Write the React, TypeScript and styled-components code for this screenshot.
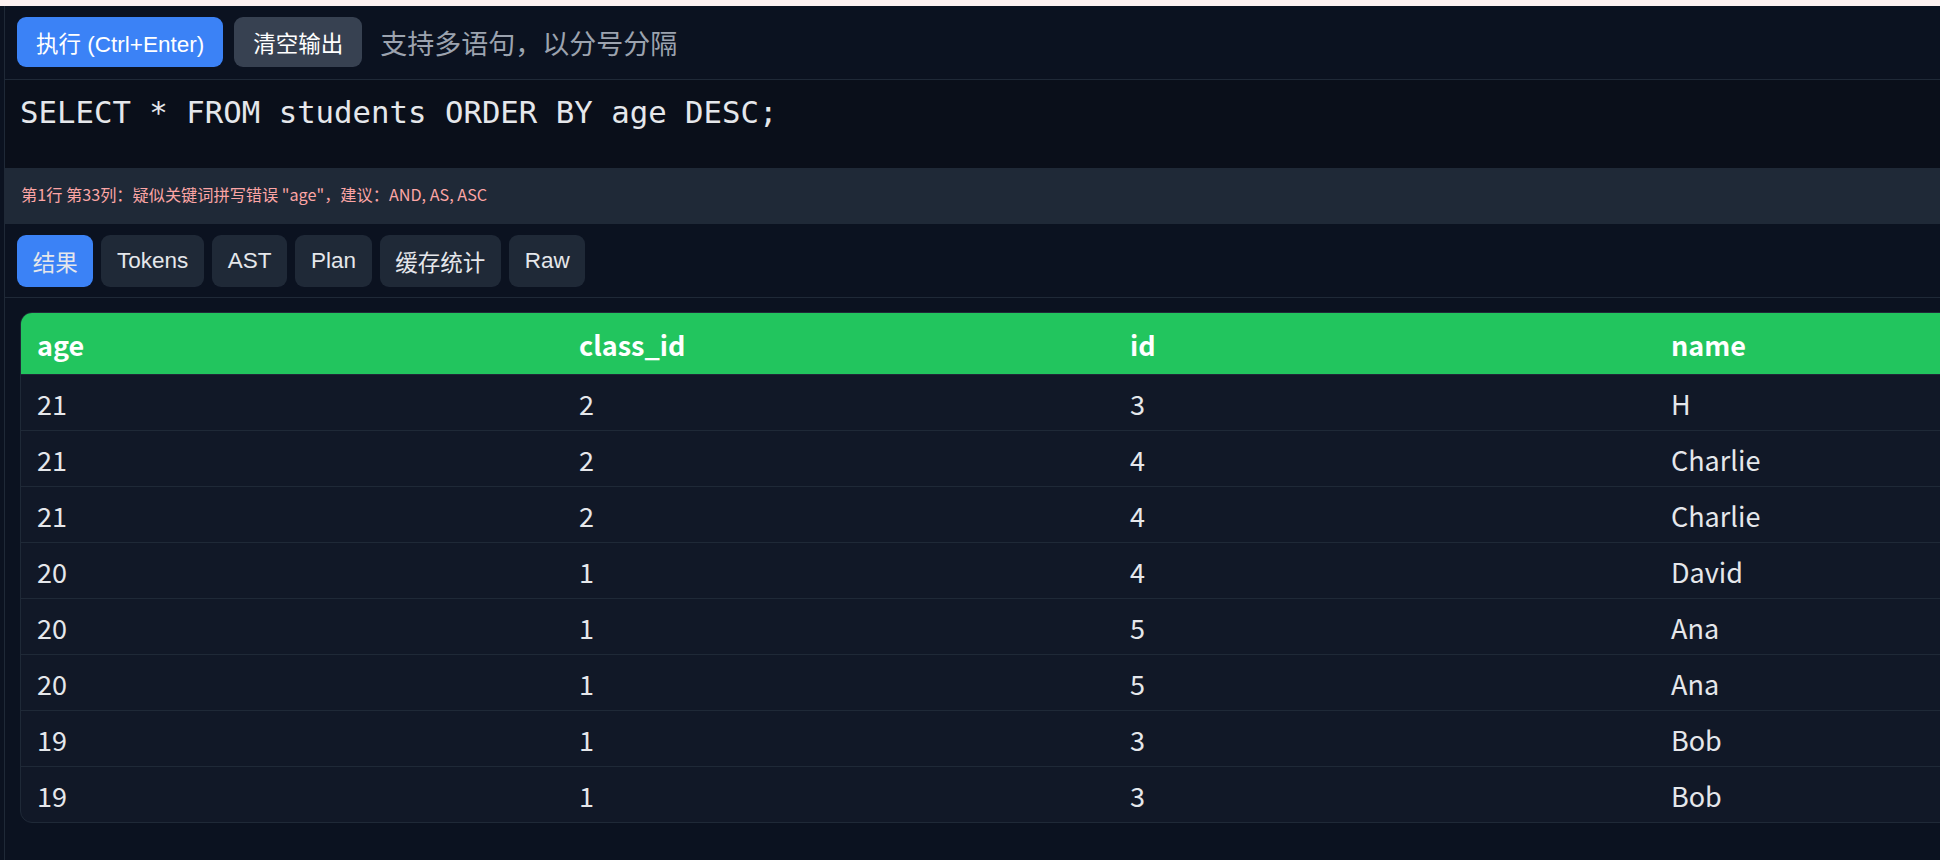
import React from "react";
import styled, { createGlobalStyle } from "styled-components";

const GlobalStyle = createGlobalStyle`
  html, body {
    margin: 0;
    padding: 0;
    overflow: hidden;
    background: #0b1220;
  }
  body {
    font-family: "Liberation Sans", "Noto Sans CJK SC", sans-serif;
  }
  * { box-sizing: border-box; }
`;

const Page = styled.div`
  display: flex;
  flex-direction: column;
  min-height: 860px;
  width: 2240px;
`;

const TopStrip = styled.div`
  height: 6px;
  background: #fdf1f1;
`;

const Shell = styled.div`
  flex: 1;
  margin-left: 4px;
  border-left: 1px solid #1f2937;
  background: #0b1220;
  display: flex;
  flex-direction: column;
`;

const Toolbar = styled.div`
  display: flex;
  align-items: center;
  gap: 11px;
  padding: 11px 12px 12px;
  border-bottom: 1px solid #1f2937;
`;

const Button = styled.button<{ $primary?: boolean }>`
  height: 50px;
  padding: 0 19px;
  border: none;
  border-radius: 9px;
  font-family: "Liberation Sans", "Noto Sans CJK SC", sans-serif;
  font-size: 22.5px;
  color: #ffffff;
  background: ${(p) => (p.$primary ? "#3b82f6" : "#374151")};
  cursor: pointer;
  white-space: nowrap;
`;

const Hint = styled.span`
  margin-left: 7px;
  font-family: "Noto Sans CJK SC", sans-serif;
  font-size: 27px;
  color: #9ca3af;
`;

const Editor = styled.div`
  height: 88px;
  padding: 10px 15px 0;
  background: #0a0f1a;
  font-family: "DejaVu Sans Mono", "Liberation Mono", monospace;
  font-size: 30.7px;
  line-height: 46px;
  color: #e5e7eb;
  white-space: pre;
`;

const ErrorBar = styled.div`
  height: 56px;
  display: flex;
  align-items: center;
  padding: 0 16px 5px;
  background: #1f2937;
  font-family: "Noto Sans CJK SC", sans-serif;
  font-size: 16.2px;
  color: #fca5a5;
  white-space: pre;
`;

const Tabs = styled.div`
  display: flex;
  gap: 8px;
  padding: 11px 12px 10px;
  border-bottom: 1px solid #1f2937;
`;

const Tab = styled.button<{ $active?: boolean }>`
  height: 52px;
  padding: 0 15.7px;
  border: none;
  border-radius: 9px;
  font-family: "Liberation Sans", "Noto Sans CJK SC", sans-serif;
  font-size: 22.5px;
  color: #e5e7eb;
  background: ${(p) => (p.$active ? "#3b82f6" : "#1f2937")};
  cursor: pointer;
`;

const TableWrap = styled.div`
  padding: 14px 15px 0;
`;

const Table = styled.table`
  width: 2200px;
  table-layout: fixed;
  border-collapse: separate;
  border-spacing: 0;
  border: 1px solid #1f2937;
  border-radius: 12px;
  overflow: hidden;
  background: #111827;
  font-family: "Noto Sans CJK SC", sans-serif;
`;

const HeadCell = styled.th`
  height: 61px;
  padding: 2px 16px 0;
  background: #22c55e;
  color: #ffffff;
  font-size: 27px;
  font-weight: 700;
  text-align: left;
  vertical-align: middle;
`;

const Cell = styled.td`
  height: 56px;
  padding: 2px 16px 0;
  font-size: 27px;
  color: #e5e7eb;
  vertical-align: middle;
  border-top: 1px solid #1f2937;
`;

const columns = ["age", "class_id", "id", "name"];
const widths = [542, 551, 541, 564];

const rows: (string | number)[][] = [
  [21, 2, 3, "H"],
  [21, 2, 4, "Charlie"],
  [21, 2, 4, "Charlie"],
  [20, 1, 4, "David"],
  [20, 1, 5, "Ana"],
  [20, 1, 5, "Ana"],
  [19, 1, 3, "Bob"],
  [19, 1, 3, "Bob"],
];

const tabs = ["结果", "Tokens", "AST", "Plan", "缓存统计", "Raw"];

export default function App() {
  return (
    <>
      <GlobalStyle />
      <Page>
        <TopStrip />
        <Shell>
          <Toolbar>
            <Button $primary>执行 (Ctrl+Enter)</Button>
            <Button>清空输出</Button>
            <Hint>支持多语句，以分号分隔</Hint>
          </Toolbar>
          <Editor>SELECT * FROM students ORDER BY age DESC;</Editor>
          <ErrorBar>第1行 第33列：疑似关键词拼写错误 "age"，建议：AND, AS, ASC</ErrorBar>
          <Tabs>
            {tabs.map((t, i) => (
              <Tab key={t} $active={i === 0}>
                {t}
              </Tab>
            ))}
          </Tabs>
          <TableWrap>
            <Table>
              <colgroup>
                {widths.map((w, i) => (
                  <col key={i} style={{ width: w }} />
                ))}
              </colgroup>
              <thead>
                <tr>
                  {columns.map((c) => (
                    <HeadCell key={c}>{c}</HeadCell>
                  ))}
                </tr>
              </thead>
              <tbody>
                {rows.map((r, i) => (
                  <tr key={i}>
                    {r.map((v, j) => (
                      <Cell key={j}>{v}</Cell>
                    ))}
                  </tr>
                ))}
              </tbody>
            </Table>
          </TableWrap>
        </Shell>
      </Page>
    </>
  );
}
